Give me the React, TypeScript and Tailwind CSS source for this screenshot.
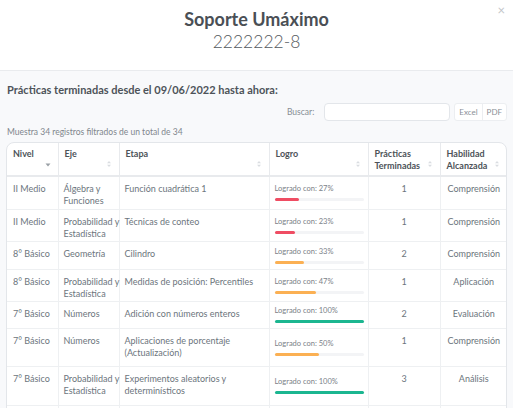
import React from "react";

type Row = {
  nivel: string;
  eje: string[];
  etapa: string[];
  logro: number | null;
  practicas: string;
  habilidad: string;
  h: string;
};

const rows: Row[] = [
  { nivel: "II Medio", eje: ["Álgebra y", "Funciones"], etapa: ["Función cuadrática 1"], logro: 27, practicas: "1", habilidad: "Comprensión", h: "h-[33px]" },
  { nivel: "II Medio", eje: ["Probabilidad y", "Estadística"], etapa: ["Técnicas de conteo"], logro: 23, practicas: "1", habilidad: "Comprensión", h: "h-[32px]" },
  { nivel: "8° Básico", eje: ["Geometría"], etapa: ["Cilindro"], logro: 33, practicas: "2", habilidad: "Comprensión", h: "h-[28px]" },
  { nivel: "8° Básico", eje: ["Probabilidad y", "Estadística"], etapa: ["Medidas de posición: Percentiles"], logro: 47, practicas: "1", habilidad: "Aplicación", h: "h-[32px]" },
  { nivel: "7° Básico", eje: ["Números"], etapa: ["Adición con números enteros"], logro: 100, practicas: "2", habilidad: "Evaluación", h: "h-[27px]" },
  { nivel: "7° Básico", eje: ["Números"], etapa: ["Aplicaciones de porcentaje", "(Actualización)"], logro: 50, practicas: "1", habilidad: "Comprensión", h: "h-[38px]" },
  { nivel: "7° Básico", eje: ["Probabilidad y", "Estadística"], etapa: ["Experimentos aleatorios y", "determinísticos"], logro: 100, practicas: "3", habilidad: "Análisis", h: "h-[39px]" },
  // next row starts right at the bottom edge, its text is below the fold
  { nivel: "", eje: [], etapa: [], logro: null, practicas: "", habilidad: "", h: "h-[30px]" },
];

function barColor(p: number) {
  if (p >= 80) return "bg-[#1bb690]";
  if (p >= 30) return "bg-[#fbb053]";
  return "bg-[#ef4d63]";
}

function SortIcon({ active }: { active?: boolean }) {
  if (active) {
    return (
      <svg width="6" height="6" viewBox="0 0 6 6" className="shrink-0">
        <path d="M0.5 1.5 L5.5 1.5 L3 4.5 Z" fill="#9aa0a6" />
      </svg>
    );
  }
  return (
    <svg width="6" height="8" viewBox="0 0 6 8" className="shrink-0">
      <path d="M1 3.3 L5 3.3 L3 1 Z" fill="#dadde1" />
      <path d="M1 4.7 L5 4.7 L3 7 Z" fill="#dadde1" />
    </svg>
  );
}

function Th({ lines, w, active, last }: { lines: string[]; w: string; active?: boolean; last?: boolean }) {
  return (
    <th className={`${w} ${last ? "" : "border-r"} border-[#e8eaed] p-0 align-top font-bold`}>
      <div className="flex h-[32px] items-end justify-between pl-[6px] pr-[7px] pb-[7px] pt-[5px]">
        <div className="self-start whitespace-nowrap text-left leading-[12px]">
          {lines.map((l) => (
            <div key={l}>{l}</div>
          ))}
        </div>
        <SortIcon active={active} />
      </div>
    </th>
  );
}

export default function App() {
  return (
    <div className="h-[408px] w-[513px] overflow-hidden bg-white font-['Lato','Noto_Sans',sans-serif] text-[#6c757d]">
      <div className="relative flex h-[71px] flex-col items-center border-b border-[#e9ebee] pt-[7px]">
        <h1 className="text-[18px] font-bold leading-[24px] text-[#4a4f55]">Soporte Umáximo</h1>
        <div className="text-[17.5px] font-light leading-[22px] text-[#555a60]">2222222-8</div>
        <span className="absolute right-[8px] top-[4px] text-[13px] leading-none text-[#c3c6ca]">×</span>
      </div>

      <div className="h-[337px] bg-[#f8f9fb] px-[6px] pt-[12px]">
        <p className="pl-px text-[11px] font-bold leading-[14px] text-[#4d5359]">
          Prácticas terminadas desde el 09/06/2022 hasta ahora:
        </p>

        <div className="mt-[6px] flex items-center justify-end gap-[4px]">
          <span className="mr-[6px] text-[8.5px] text-[#878d94]">Buscar:</span>
          <div className="h-[18px] w-[126px] rounded-[4px] border border-[#e3e6ea] bg-white" />
          <div className="flex h-[18px] overflow-hidden rounded-[3px] border border-[#eceef1] bg-white text-[8px] text-[#8a9097]">
            <span className="flex items-center border-r border-[#eceef1] px-[4px]">Excel</span>
            <span className="flex items-center px-[4px]">PDF</span>
          </div>
        </div>

        <p className="mt-[5px] pl-px text-[8.5px] leading-[12px] text-[#80868d]">
          Muestra 34 registros filtrados de un total de 34
        </p>

        <div className="mt-[4px] overflow-hidden rounded-t-[8px] border border-[#e3e6ea] bg-white">
          <table className="w-[500px] table-fixed border-collapse text-[9px]">
            <thead className="text-[#4d5359]">
              <tr className="border-b-2 border-[#e8eaed]">
                <Th lines={["Nivel"]} w="w-[51px]" active />
                <Th lines={["Eje"]} w="w-[61px]" />
                <Th lines={["Etapa"]} w="w-[150px]" />
                <Th lines={["Logro"]} w="w-[99px]" />
                <Th lines={["Prácticas", "Terminadas"]} w="w-[72px]" />
                <Th lines={["Habilidad", "Alcanzada"]} w="w-[67px]" last />
              </tr>
            </thead>
            <tbody>
              {rows.map((r, i) => (
                <tr key={i} className={`${r.h} border-b border-[#eef0f2]`}>
                  <td className="whitespace-nowrap border-r border-[#eef0f2] px-[6px] pt-[6px] align-top leading-[12px]">{r.nivel}</td>
                  <td className="whitespace-nowrap border-r border-[#eef0f2] px-[5px] pt-[6px] align-top leading-[12px]">
                    {r.eje.map((l) => (
                      <div key={l}>{l}</div>
                    ))}
                  </td>
                  <td className="whitespace-nowrap border-r border-[#eef0f2] px-[5px] pt-[6px] align-top leading-[12px]">
                    {r.etapa.map((l) => (
                      <div key={l}>{l}</div>
                    ))}
                  </td>
                  <td className="border-r border-[#eef0f2] px-[5px] align-middle">
                    {r.logro !== null && (
                      <>
                        <div className="text-[7.5px] leading-[10px] text-[#7b8188]">Logrado con: {r.logro}%</div>
                        <div className="mt-[4px] h-[3px] w-[89px] rounded-full bg-[#f3f4f6]">
                          <div className={`h-[3px] rounded-full ${barColor(r.logro)}`} style={{ width: `${r.logro}%` }} />
                        </div>
                      </>
                    )}
                  </td>
                  <td className="border-r border-[#eef0f2] pt-[6px] text-center align-top leading-[12px]">{r.practicas}</td>
                  <td className="pt-[6px] text-center align-top leading-[12px]">{r.habilidad}</td>
                </tr>
              ))}
            </tbody>
          </table>
        </div>
      </div>
    </div>
  );
}
